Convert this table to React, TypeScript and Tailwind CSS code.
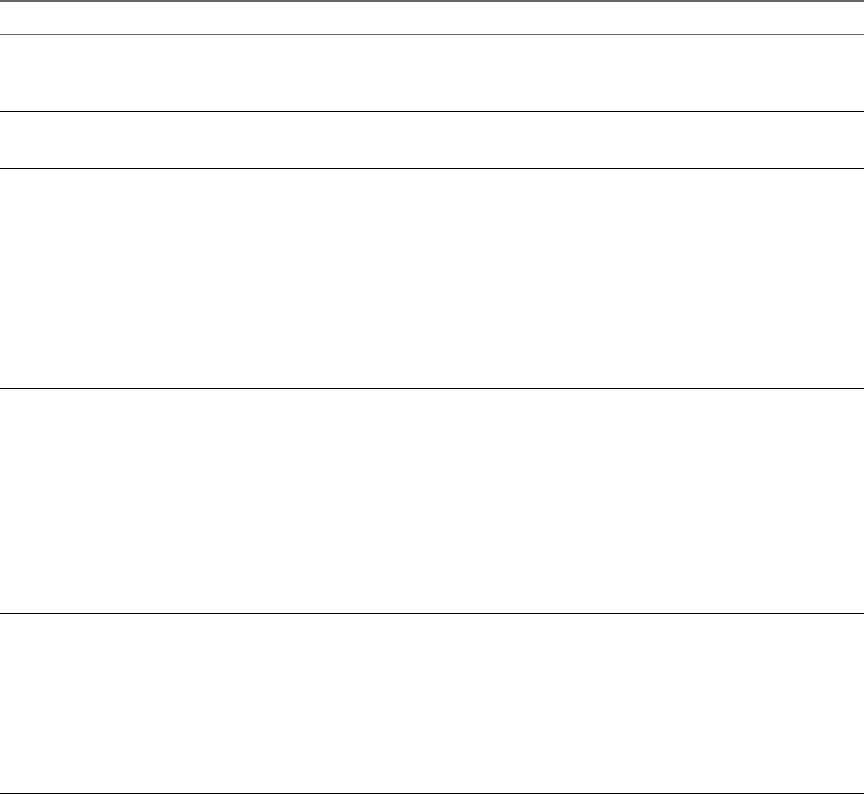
export default function App() {
  return (
    <div className="w-[864px] bg-white flex flex-col" style={{ fontFamily: '"Liberation Sans", Arial, sans-serif' }}>
      <div className="h-[2px] bg-[#666666]" />
      <div className="h-[32px]" />
      <div className="h-px bg-[#666666]" />
      <div className="h-[76px]" />
      <div className="h-px bg-black" />
      <div className="h-[56px]" />
      <div className="h-px bg-black" />
      <div className="h-[219px]" />
      <div className="h-px bg-black" />
      <div className="h-[224px]" />
      <div className="h-px bg-black" />
      <div className="h-[179px]" />
      <div className="h-px bg-black" />
    </div>
  );
}
